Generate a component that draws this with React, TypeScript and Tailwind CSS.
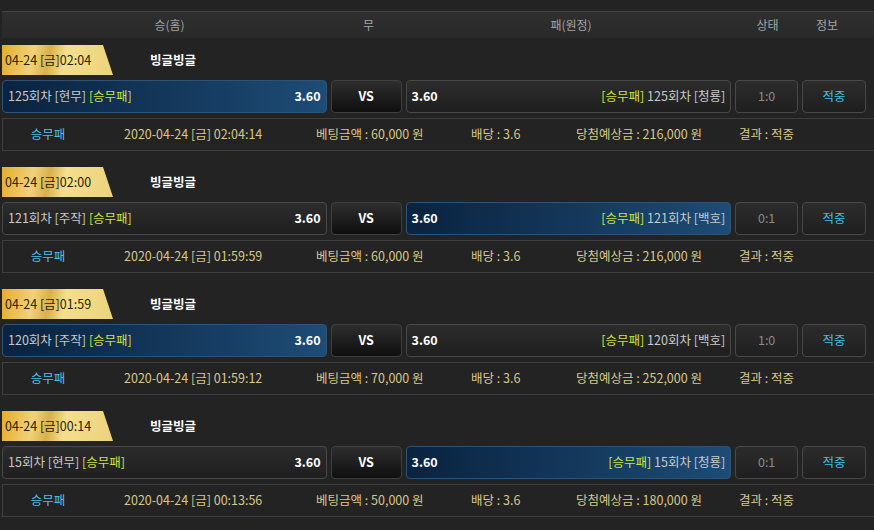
import React from 'react';

interface Bet {
    tag: string;
    home: string;
    away: string;
    pick: 'home' | 'away';
    score: string;
    time: string;
    amount: string;
    win: string;
}

const bets: Bet[] = [
    { tag: '04-24 [금]02:04', home: '125회차 [현무]', away: '125회차 [청룡]', pick: 'home', score: '1:0', time: '2020-04-24 [금] 02:04:14', amount: '60,000', win: '216,000' },
    { tag: '04-24 [금]02:00', home: '121회차 [주작]', away: '121회차 [백호]', pick: 'away', score: '0:1', time: '2020-04-24 [금] 01:59:59', amount: '60,000', win: '216,000' },
    { tag: '04-24 [금]01:59', home: '120회차 [주작]', away: '120회차 [백호]', pick: 'home', score: '1:0', time: '2020-04-24 [금] 01:59:12', amount: '70,000', win: '252,000' },
    { tag: '04-24 [금]00:14', home: '15회차 [현무]', away: '15회차 [청룡]', pick: 'away', score: '0:1', time: '2020-04-24 [금] 00:13:56', amount: '50,000', win: '180,000' },
];

const btnBase = 'h-[33px] rounded-[4px] border flex items-center text-[12.5px]';
const offBtn = 'border-[#484848] bg-gradient-to-b from-[#2c2c2c] to-[#1f1f1f]';
const onBtn = 'border-[#2c5479] bg-gradient-to-r from-[#0a2340] to-[#1d4c76]';

const BetBlock: React.FC<{ bet: Bet }> = ({ bet }) => {
    const homeOn = bet.pick === 'home';
    return (
        <div className="flex flex-col">
            {/* title line */}
            <div className="flex items-center h-[30px]">
                <div
                    className="w-[111px] h-full flex items-center pl-[3px] text-[12.5px] text-[#2a2206] bg-[linear-gradient(100deg,#e4ad2c_0%,#f1d27a_28%,#d9b04a_42%,#f4df8e_56%,#ecd27c_100%)] [clip-path:polygon(0_0,91%_0,100%_100%,0_100%)]"
                >
                    {bet.tag}
                </div>
                <div className="ml-[37px] text-[12.5px] font-bold text-white">빙글빙글</div>
            </div>

            {/* pick line */}
            <div className="flex mt-[5px] gap-[4px] pr-[8px]">
                <div className={`${btnBase} ${homeOn ? onBtn : offBtn} w-[325px] px-[5px] justify-between`}>
                    <span className="text-[#c9c9c9]">
                        {bet.home} <span className="text-[#cde040]">[승무패]</span>
                    </span>
                    <span className="font-bold text-white">3.60</span>
                </div>
                <div className={`${btnBase} w-[71px] justify-center border-[#3f3f3f] bg-gradient-to-b from-[#2e2e2e] to-[#0f0f0f] font-bold text-white`}>
                    VS
                </div>
                <div className={`${btnBase} ${!homeOn ? onBtn : offBtn} w-[326px] px-[5px] justify-between`}>
                    <span className="font-bold text-white">3.60</span>
                    <span className="text-[#c9c9c9]">
                        <span className="text-[#cde040]">[승무패]</span> {bet.away}
                    </span>
                </div>
                <div className={`${btnBase} ${offBtn} w-[63px] justify-center text-[#8a8a8a]`}>{bet.score}</div>
                <div className={`${btnBase} ${offBtn} w-[64px] justify-center text-[#3dbfe6]`}>적중</div>
            </div>

            {/* detail line */}
            <div className="mt-[5px] h-[33px] border-y border-l border-[#3e3e3e] flex items-center text-[12.5px] text-[#d8c78a]">
                <div className="w-[90px] text-center text-[#4cc1e6]">승무패</div>
                <div className="w-[192px] ml-[31px]">{bet.time}</div>
                <div className="w-[155px]">베팅금액 : {bet.amount} 원</div>
                <div className="w-[105px]">배당 : 3.6</div>
                <div className="w-[163px]">당첨예상금 : {bet.win} 원</div>
                <div>결과 : 적중</div>
            </div>
        </div>
    );
};

export default function App() {
    return (
        <div
            className="w-[874px] h-[530px] overflow-hidden bg-[#232323] pl-[2px]"
            style={{ fontFamily: '"Noto Sans CJK KR", "Noto Sans", sans-serif' }}
        >
            <div className="h-[11px]" />
            {/* table header */}
            <div className="h-[27px] border-t border-[#444] bg-gradient-to-b from-[#2f2f2f] to-[#292929] flex items-center text-[12px] text-[#a3a3a3]">
                <div className="w-[329px] text-center pl-[6px]">승(홈)</div>
                <div className="w-[75px] text-center">무</div>
                <div className="w-[330px] text-center">패(원정)</div>
                <div className="w-[63px] text-center">상태</div>
                <div className="w-[56px] text-center">정보</div>
            </div>
            <div className="flex flex-col gap-[16px] pt-[7px]">
                {bets.map((b, i) => (
                    <BetBlock key={i} bet={b} />
                ))}
            </div>
        </div>
    );
}
